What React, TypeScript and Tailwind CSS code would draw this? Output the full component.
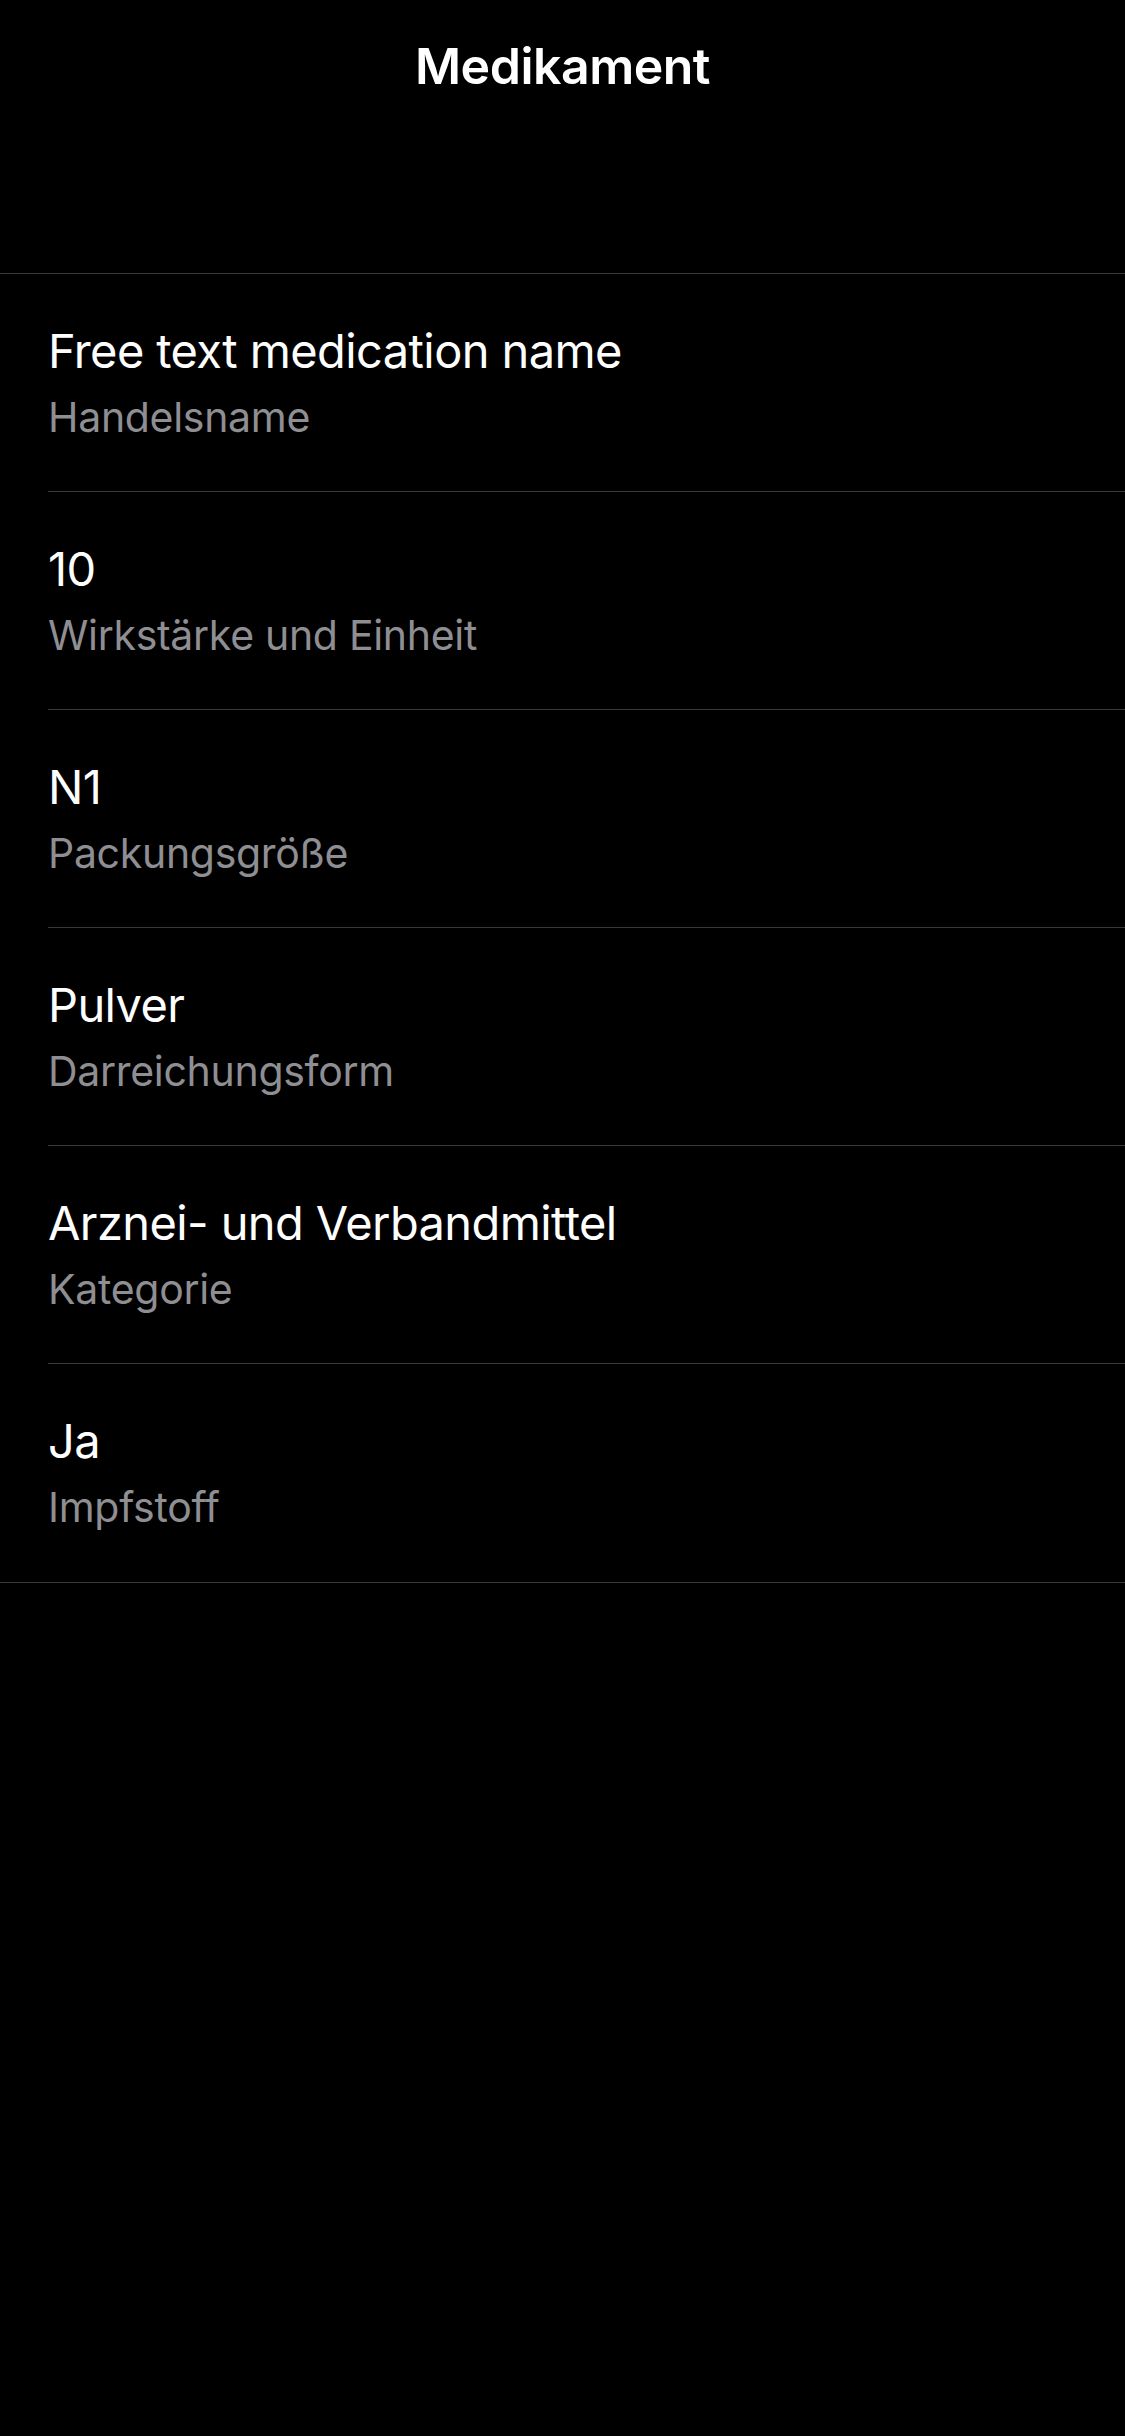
import React from "react";

const rows = [
  { value: "Free text medication name", label: "Handelsname" },
  { value: "10", label: "Wirkstärke und Einheit" },
  { value: "N1", label: "Packungsgröße" },
  { value: "Pulver", label: "Darreichungsform" },
  { value: "Arznei- und Verbandmittel", label: "Kategorie" },
  { value: "Ja", label: "Impfstoff" },
];

export default function App() {
  return (
    <div
      className="w-[1125px] h-[2436px] bg-black text-white overflow-hidden"
      style={{ fontFamily: "Inter, 'Noto Sans', sans-serif" }}
    >
      <div className="h-[273px] flex flex-col">
        <div className="h-[132px] flex items-center justify-center">
          <span className="text-[50px] font-semibold tracking-[-0.5px]">Medikament</span>
        </div>
      </div>
      <div className="border-t border-[#38383a]">
        {rows.map((r, i) => (
          <div key={i} className={i === rows.length - 1 ? "border-b border-[#38383a]" : ""}>
            <div className="pl-[48px]">
              <div
                className={
                  "h-[218px] flex flex-col pt-[47px] " +
                  (i === rows.length - 1 ? "" : "border-b border-[#38383a]")
                }
              >
                <div className="text-[47px] leading-[60px] tracking-[-0.6px] text-white">{r.value}</div>
                <div className="text-[41px] leading-[50px] mt-[11px] tracking-[-0.3px] text-[#8e8e93]">{r.label}</div>
              </div>
            </div>
          </div>
        ))}
      </div>
    </div>
  );
}
